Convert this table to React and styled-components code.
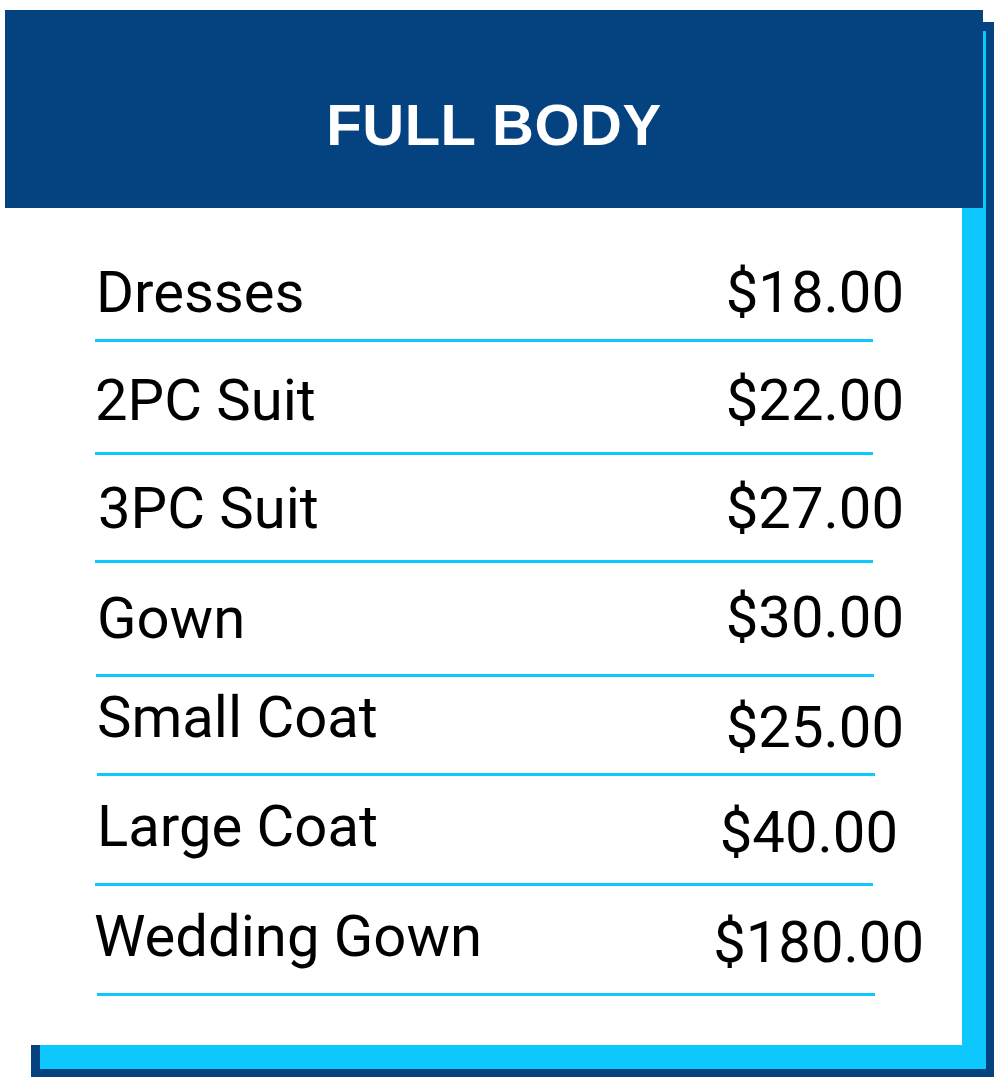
import React from "react";
import styled, { createGlobalStyle } from "styled-components";

const items = [
  { name: "Dresses", price: "$18.00", h: 134, top: 55, drop: 0, nx: 1, px: 0, rx: 0 },
  { name: "2PC Suit", price: "$22.00", h: 113, top: 29, drop: 0, nx: 0, px: 0, rx: 0 },
  { name: "3PC Suit", price: "$27.00", h: 108, top: 24, drop: 0, nx: 3, px: 0, rx: 0 },
  { name: "Gown", price: "$30.00", h: 114, top: 26, drop: -1, nx: 2, px: 0, rx: 1 },
  { name: "Small Coat", price: "$25.00", h: 99, top: 11, drop: 10, nx: 2, px: 0, rx: 2 },
  { name: "Large Coat", price: "$40.00", h: 110, top: 21, drop: 6, nx: 2, px: -6, rx: 0 },
  { name: "Wedding Gown", price: "$180.00", h: 110, top: 21, drop: 6, nx: -1, px: 20, rx: 2 },
];

function App() {
  return (
    <>
      <GlobalStyle />
      <Stage>
        <Back />
        <Glow />
        <Card>
          <Header>
            <Title>FULL BODY</Title>
          </Header>
          <List>
            {items.map((item) => (
              <Item key={item.name} $h={item.h}>
                <Line $top={item.top}>
                  <Name $dx={item.nx}>{item.name}</Name>
                  <Price $dx={item.px} $drop={item.drop}>
                    {item.price}
                  </Price>
                </Line>
                <Rule $dx={item.rx} />
              </Item>
            ))}
          </List>
        </Card>
      </Stage>
    </>
  );
}

const GlobalStyle = createGlobalStyle`
  html, body {
    margin: 0;
    padding: 0;
    background: #ffffff;
  }
`;

const Stage = styled.div`
  display: grid;
  width: 1000px;
  height: 1084px;
  overflow: hidden;
  > * {
    grid-area: 1 / 1;
    align-self: start;
    justify-self: start;
  }
`;

const Back = styled.div`
  margin: 22px 0 0 31px;
  width: 963px;
  height: 1055px;
  background-color: #04437f;
`;

const Glow = styled.div`
  margin: 31px 0 0 40px;
  width: 946px;
  height: 1038px;
  background-color: #0cc8fd;
`;

const Card = styled.div`
  margin: 10px 0 0 5px;
  width: 957px;
  height: 1035px;
  background-color: #ffffff;
  display: flex;
  flex-direction: column;
`;

const Header = styled.div`
  flex: none;
  width: 978px;
  height: 198px;
  box-sizing: border-box;
  padding-top: 86px;
  background-color: #04437f;
  display: flex;
  justify-content: center;
  align-items: flex-start;
`;

const Title = styled.h1`
  margin: 0;
  font-family: "Liberation Sans", Arial, sans-serif;
  font-weight: 700;
  font-size: 58px;
  line-height: 58px;
  letter-spacing: 0.5px;
  color: #ffffff;
`;

const List = styled.div`
  display: flex;
  flex-direction: column;
  padding-left: 90px;
`;

const Item = styled.div`
  display: flex;
  flex-direction: column;
  height: ${(p) => p.$h}px;
  width: 809px;
`;

const Line = styled.div`
  display: flex;
  justify-content: space-between;
  align-items: flex-start;
  padding-top: ${(p) => p.$top}px;
  font-family: Roboto, "Liberation Sans", sans-serif;
  font-size: 58px;
  line-height: 58px;
  color: #000000;
`;

const Name = styled.span`
  margin-left: ${(p) => p.$dx}px;
`;

const Price = styled.span`
  margin-right: ${(p) => -p.$dx}px;
  margin-top: ${(p) => p.$drop}px;
`;

const Rule = styled.div`
  margin-top: auto;
  margin-left: ${(p) => p.$dx}px;
  width: 778px;
  height: 3px;
  background-color: #0cc8fd;
`;

export default App;
